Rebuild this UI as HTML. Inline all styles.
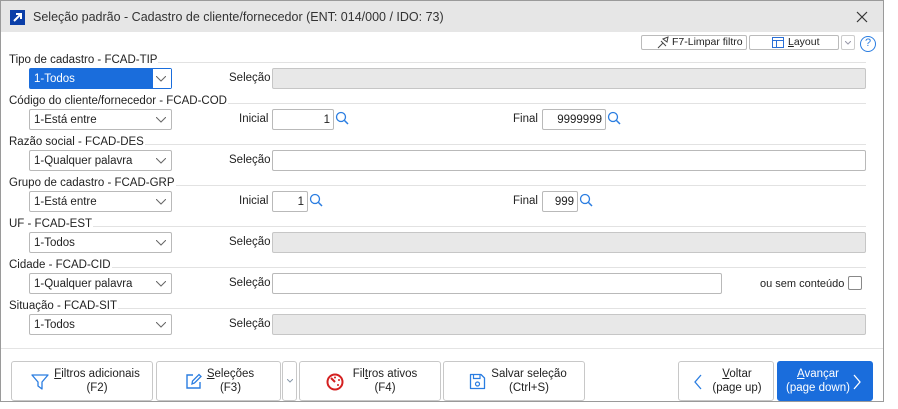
<!DOCTYPE html>
<html><head><meta charset="utf-8"><style>
*{box-sizing:border-box;margin:0;padding:0}
body{width:898px;height:409px;background:#fff;font-family:"Liberation Sans",sans-serif;font-size:12px;color:#222;position:relative;overflow:hidden}
.win{position:absolute;left:0;top:0;width:884px;height:402px;border:1px solid #9a9a9a;background:#fff}
.title{position:absolute;left:0;top:0;width:882px;height:31px;background:#e6e6e6}
.a{position:absolute}
.lbl{position:absolute;font-size:11.5px;color:#222;white-space:nowrap}
.hd{background:#fff;padding-right:1px;z-index:2}
.sep{position:absolute;height:1px;background:#e2e2e2;z-index:1}
.combo{position:absolute;left:28px;width:143px;height:21px;border:1px solid #b9b9b9;border-radius:2px;background:#fff;padding-left:4px;line-height:21px;font-size:11.5px}
.combo svg{position:absolute;right:5px;top:7px}
.fld{position:absolute;height:21px;border:1px solid #b9b9b9;border-radius:2px;background:#fff;text-align:right;padding-right:3px;line-height:21px;font-size:11.5px}
.dis{background:#e8e8e8;border-color:#c6c6c6}
.btn{position:absolute;top:360px;height:40px;border:1px solid #c8c8c8;border-radius:3px;background:#fff;font-size:11.5px;text-align:center;line-height:14px;padding-top:5px}
.btn svg{position:absolute}
.r{top:1px}
</style></head><body>
<div class="win">
<div class="title"></div>
<div class="a" style="left:9px;top:9px;width:15px;height:15px;background:#0a3ea8"><svg width="15" height="15"><path d="M4 11L11 4M6 4H11V9" stroke="#fff" stroke-width="2" fill="none"/></svg></div>
<div class="lbl" style="left:32px;top:9px;font-size:12.5px;color:#333">Seleção padrão - Cadastro de cliente/fornecedor (ENT: 014/000 / IDO: 73)</div>
<svg class="a" style="left:855px;top:10px" width="12" height="12"><path d="M1 1L11 11M11 1L1 11" stroke="#333" stroke-width="1.2"/></svg>

<div class="a" style="left:640px;top:34px;width:106px;height:15px;border:1px solid #bbb;border-radius:2px;font-size:10.5px;line-height:13px;padding-left:30px">F7-Limpar filtro</div>
<svg class="a" style="left:655px;top:35px" width="14" height="13"><path d="M2 12L7 7M5 5L10 10M7 3L12 1L11 6Z" stroke="#444" fill="none"/></svg>
<div class="a" style="left:748px;top:34px;width:90px;height:15px;border:1px solid #bbb;border-radius:2px;font-size:10.5px;line-height:13px;padding-left:38px"><u>L</u>ayout</div>
<svg class="a" style="left:771px;top:36px" width="12" height="11"><rect x=".5" y=".5" width="11" height="10" stroke="#2a6fd6" fill="none"/><path d="M.5 3.5H11.5M4.5 3.5V10.5" stroke="#2a6fd6"/></svg>
<div class="a" style="left:840px;top:34px;width:14px;height:15px;border:1px solid #ccc;border-radius:2px"><svg style="position:absolute;left:3px;top:5px" width="6" height="4"><path d="M0 0L3 3L6 0" stroke="#99a" fill="none"/></svg></div>
<div class="a" style="left:859px;top:35px;width:16px;height:16px;border:1.5px solid #2a7de1;border-radius:50%;color:#2a7de1;font-size:11px;text-align:center;line-height:13px">?</div>

<div class="lbl hd" style="left:8px;top:53px">Tipo de cadastro - FCAD-TIP</div><div class="sep" style="left:9px;width:856px;top:61px"></div>
<div class="combo" style="top:67px;background:#1a6ddc;border-color:#1a6ddc;color:#fff;">1-Todos<span style="position:absolute;right:0;top:0;width:18px;height:19px;background:#fff"></span><svg width="10" height="6"><path d="M0 0L5 5L10 0" stroke="#666" fill="none"/></svg></div>
<div class="lbl" style="left:228px;top:71px">Seleção</div><div class="fld dis" style="left:271px;width:594px;top:67px"></div>

<div class="lbl hd" style="left:8px;top:94px">Código do cliente/fornecedor - FCAD-COD</div><div class="sep" style="left:9px;width:856px;top:102px"></div>
<div class="combo" style="top:108px">1-Está entre<svg width="10" height="6"><path d="M0 0L5 5L10 0" stroke="#666" fill="none"/></svg></div>
<div class="lbl" style="left:238px;top:112px">Inicial</div><div class="fld" style="left:271px;width:62px;top:108px">1</div>
<svg class="a" style="left:334px;top:110px" width="15" height="15"><circle cx="6" cy="6" r="4.5" stroke="#2a7de1" stroke-width="1.3" fill="none"/><path d="M9.5 9.5L13 13" stroke="#2a7de1" stroke-width="1.5"/></svg>
<div class="lbl" style="left:512px;top:112px">Final</div><div class="fld" style="left:541px;width:64px;top:108px">9999999</div>
<svg class="a" style="left:606px;top:110px" width="15" height="15"><circle cx="6" cy="6" r="4.5" stroke="#2a7de1" stroke-width="1.3" fill="none"/><path d="M9.5 9.5L13 13" stroke="#2a7de1" stroke-width="1.5"/></svg>

<div class="lbl hd" style="left:8px;top:135px">Razão social - FCAD-DES</div><div class="sep" style="left:9px;width:856px;top:143px"></div>
<div class="combo" style="top:149px">1-Qualquer palavra<svg width="10" height="6"><path d="M0 0L5 5L10 0" stroke="#666" fill="none"/></svg></div>
<div class="lbl" style="left:228px;top:153px">Seleção</div><div class="fld" style="left:271px;width:594px;top:149px"></div>

<div class="lbl hd" style="left:8px;top:176px">Grupo de cadastro - FCAD-GRP</div><div class="sep" style="left:9px;width:856px;top:184px"></div>
<div class="combo" style="top:190px">1-Está entre<svg width="10" height="6"><path d="M0 0L5 5L10 0" stroke="#666" fill="none"/></svg></div>
<div class="lbl" style="left:238px;top:194px">Inicial</div><div class="fld" style="left:271px;width:36px;top:190px">1</div>
<svg class="a" style="left:308px;top:192px" width="15" height="15"><circle cx="6" cy="6" r="4.5" stroke="#2a7de1" stroke-width="1.3" fill="none"/><path d="M9.5 9.5L13 13" stroke="#2a7de1" stroke-width="1.5"/></svg>
<div class="lbl" style="left:512px;top:194px">Final</div><div class="fld" style="left:541px;width:36px;top:190px">999</div>
<svg class="a" style="left:578px;top:192px" width="15" height="15"><circle cx="6" cy="6" r="4.5" stroke="#2a7de1" stroke-width="1.3" fill="none"/><path d="M9.5 9.5L13 13" stroke="#2a7de1" stroke-width="1.5"/></svg>

<div class="lbl hd" style="left:8px;top:217px">UF - FCAD-EST</div><div class="sep" style="left:9px;width:856px;top:225px"></div>
<div class="combo" style="top:231px">1-Todos<svg width="10" height="6"><path d="M0 0L5 5L10 0" stroke="#666" fill="none"/></svg></div>
<div class="lbl" style="left:228px;top:235px">Seleção</div><div class="fld dis" style="left:271px;width:594px;top:231px"></div>

<div class="lbl hd" style="left:8px;top:258px">Cidade - FCAD-CID</div><div class="sep" style="left:9px;width:856px;top:266px"></div>
<div class="combo" style="top:272px">1-Qualquer palavra<svg width="10" height="6"><path d="M0 0L5 5L10 0" stroke="#666" fill="none"/></svg></div>
<div class="lbl" style="left:228px;top:276px">Seleção</div><div class="fld" style="left:271px;width:450px;top:272px"></div>
<div class="lbl" style="left:759px;top:277px;font-size:11px">ou sem conteúdo</div>
<div class="a" style="left:847px;top:275px;width:14px;height:14px;border:1px solid #888;border-radius:2px"></div>

<div class="lbl hd" style="left:8px;top:299px">Situação - FCAD-SIT</div><div class="sep" style="left:9px;width:856px;top:307px"></div>
<div class="combo" style="top:313px">1-Todos<svg width="10" height="6"><path d="M0 0L5 5L10 0" stroke="#666" fill="none"/></svg></div>
<div class="lbl" style="left:228px;top:317px">Seleção</div><div class="fld dis" style="left:271px;width:594px;top:313px"></div>

<div class="sep" style="left:0;width:882px;top:347px;background:#e4e4e4"></div>

<div class="btn" style="left:10px;width:142px;padding-left:30px"><u>F</u>iltros adicionais<br>(F2)
<svg style="left:19px;top:11px" width="18" height="18"><path d="M1 2H17L11 9V16L7 13V9Z" stroke="#2a7de1" stroke-width="1.3" fill="none" stroke-linejoin="round"/></svg></div>
<div class="btn" style="left:155px;width:125px;padding-left:24px"><u>S</u>eleções<br>(F3)
<svg style="left:28px;top:10px" width="18" height="18"><path d="M8 3H2V16H15V10" stroke="#2a7de1" stroke-width="1.4" fill="none"/><path d="M7 12L7.5 9L14 2.5L16 4.5L9.5 11Z" stroke="#2a7de1" stroke-width="1.3" fill="none"/></svg></div>
<div class="btn" style="left:281px;width:15px"><svg style="left:4px;top:17px" width="6" height="4"><path d="M0 0L3 3L6 0" stroke="#89a" fill="none"/></svg></div>
<div class="btn" style="left:298px;width:142px;padding-left:30px">Fil<u>t</u>ros ativos<br>(F4)
<svg style="left:26px;top:11px" width="18" height="18"><circle cx="9" cy="9" r="7.5" stroke="#d42020" stroke-width="2" fill="none"/><path d="M9 9L5 5" stroke="#d42020" stroke-width="2"/><circle cx="9" cy="4.5" r="1" fill="#d42020"/><circle cx="13" cy="7" r="1" fill="#d42020"/><circle cx="12" cy="12" r="1" fill="#d42020"/></svg></div>
<div class="btn" style="left:442px;width:142px;padding-left:30px">Salvar seleção<br>(Ctrl+S)
<svg style="left:25px;top:11px" width="17" height="17"><path d="M1.5 1.5H12L15.5 5V15.5H1.5Z" stroke="#2a7de1" stroke-width="1.3" fill="none" stroke-linejoin="round"/><path d="M4.5 1.5V5.5H11V1.5" stroke="#2a7de1" stroke-width="1.2" fill="none"/><circle cx="8.5" cy="11" r="2" stroke="#2a7de1" stroke-width="1.2" fill="none"/></svg></div>
<div class="btn" style="left:677px;width:96px;padding-left:22px"><u>V</u>oltar<br>(page up)
<svg style="left:14px;top:12px" width="10" height="16"><path d="M8 1L2 8L8 15" stroke="#2a7de1" stroke-width="1.3" fill="none"/></svg></div>
<div class="btn" style="left:776px;width:96px;background:#1a6ddc;border-color:#1a6ddc;color:#fff;padding-right:14px"><u>A</u>vançar<br>(page down)
<svg style="left:74px;top:12px" width="10" height="16"><path d="M2 1L8 8L2 15" stroke="#fff" stroke-width="1.3" fill="none"/></svg></div>
</div>
</body></html>
